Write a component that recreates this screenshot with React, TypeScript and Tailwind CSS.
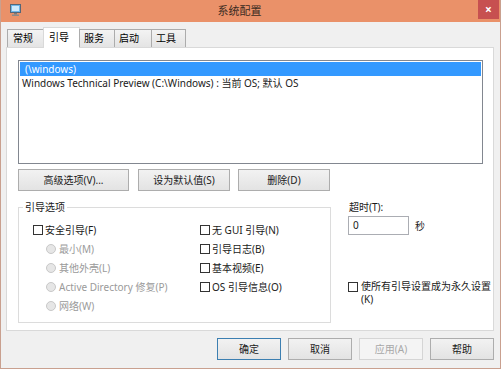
import React from "react";

type BoxProps = { label: string; disabled?: boolean };

function CheckBox({ label, disabled }: BoxProps) {
  return (
    <div className="flex items-center h-[19px] gap-[2px]">
      <span className="w-[10px] h-[10px] border border-[#333333] bg-white shrink-0" />
      <span className={disabled ? "text-[#a0a0a0]" : "text-[#1a1a1a]"}>{label}</span>
    </div>
  );
}

function Radio({ label }: BoxProps) {
  return (
    <div className="flex items-center h-[19px] gap-[3px] pl-[13px]">
      <span className="w-[10px] h-[10px] rounded-full border border-[#c8c8c8] bg-[#e6e6e6] shrink-0" />
      <span className="text-[#9a9a9a]">{label}</span>
    </div>
  );
}

type BtnProps = {
  children: React.ReactNode;
  className?: string;
  isDefault?: boolean;
  disabled?: boolean;
};

function Btn({ children, className, isDefault, disabled }: BtnProps) {
  let look = "border-[#adadad] bg-gradient-to-b from-[#f2f2f2] to-[#e3e3e3] text-[#1a1a1a]";
  if (isDefault) look = "border-[#3c7fb1] bg-gradient-to-b from-[#f2f2f2] to-[#e3e3e3] text-[#1a1a1a]";
  if (disabled) look = "border-[#d5d5d5] bg-[#f4f4f4] text-[#a8a8a8]";
  return (
    <div className={"h-[22px] border flex items-center justify-center shrink-0 " + look + " " + (className || "")}>
      {children}
    </div>
  );
}

export default function App() {
  return (
    <div className="w-[501px] h-[371px] bg-white font-['Noto_Sans','Noto_Sans_CJK_SC',sans-serif] text-[10px] leading-[14px]">
      <div className="h-[369px] flex flex-col bg-[#f0f0f0] border-l border-r border-b border-[#c9a08f]">
        {/* title bar */}
        <div className="h-[22px] bg-[#ea9169] flex items-start relative">
          <svg className="absolute left-[9px] top-[4px]" width="11" height="12" viewBox="0 0 11 12">
            <rect x="0.5" y="0.5" width="10" height="8" fill="#6fb6e8" stroke="#556677" />
            <rect x="2" y="2" width="7" height="5" fill="#cfe9fb" />
            <rect x="4" y="9" width="3" height="1.5" fill="#7a7a7a" />
            <rect x="2" y="10.5" width="7" height="1.5" fill="#8a8a8a" />
          </svg>
          <div className="flex-1 text-center text-[11px] leading-[22px] text-[#3b2b22]">系统配置</div>
          <div className="w-[21px] h-[19px] bg-[#c75050] flex items-center justify-center text-white text-[12px] font-bold mr-[1px]">
            ×
          </div>
        </div>

        {/* body */}
        <div className="flex-1 px-[5px] pt-[5px]">
          {/* tabs */}
          <div className="flex items-end h-[20px] pl-[1px] relative z-10">
            <div className="w-[37px] h-[18px] border border-b-0 border-[#acacac] bg-gradient-to-b from-[#f3f3f3] to-[#e4e4e4] pl-[5px] leading-[17px]">常规</div>
            <div className="w-[37px] h-[21px] -ml-px -mb-px border border-b-0 border-[#d9d9d9] bg-white pl-[5px] leading-[19px]">引导</div>
            <div className="w-[36px] h-[18px] -ml-px border border-b-0 border-[#acacac] bg-gradient-to-b from-[#f3f3f3] to-[#e4e4e4] pl-[4px] leading-[17px]">服务</div>
            <div className="w-[38px] h-[18px] -ml-px border border-b-0 border-[#acacac] bg-gradient-to-b from-[#f3f3f3] to-[#e4e4e4] pl-[4px] leading-[17px]">启动</div>
            <div className="w-[35px] h-[18px] -ml-px border border-b-0 border-[#acacac] bg-gradient-to-b from-[#f3f3f3] to-[#e4e4e4] pl-[4px] leading-[17px]">工具</div>
          </div>

          {/* tab page */}
          <div className="w-[488px] h-[284px] bg-white border border-[#d9d9d9] px-[11px] pt-[12px] text-[#1a1a1a]">
            <div className="w-[465px] h-[104px] border border-[#828790] p-px">
              <div className="h-[14px] bg-[#3399ff] text-white pl-[5px] leading-[14px]">(\windows)</div>
              <div className="h-[14px] pl-[2px] leading-[14px]">Windows Technical Preview (C:\Windows) : 当前 OS; 默认 OS</div>
            </div>

            <div className="flex mt-[5px]">
              <Btn className="w-[111px]">高级选项(V)...</Btn>
              <Btn className="w-[92px] ml-[9px]">设为默认值(S)</Btn>
              <Btn className="w-[92px] ml-[8px]">删除(D)</Btn>
            </div>

            <div className="flex mt-[8px]">
              <fieldset className="w-[313px] h-[124px] shrink-0 border border-[#dcdcdc]">
                <legend className="ml-[4px] px-[2px] leading-[16px]">引导选项</legend>
                <div className="flex pl-[14px] pt-[5px]">
                  <div className="w-[167px] flex flex-col">
                    <CheckBox label="安全引导(F)" />
                    <Radio label="最小(M)" />
                    <Radio label="其他外壳(L)" />
                    <Radio label="Active Directory 修复(P)" />
                    <Radio label="网络(W)" />
                  </div>
                  <div className="flex flex-col">
                    <CheckBox label="无 GUI 引导(N)" />
                    <CheckBox label="引导日志(B)" />
                    <CheckBox label="基本视频(E)" />
                    <CheckBox label="OS 引导信息(O)" />
                  </div>
                </div>
              </fieldset>

              <div className="ml-[17px] flex flex-col">
                <div className="pl-[1px] mt-[1px]">超时(T):</div>
                <div className="flex items-center mt-[2px]">
                  <div className="w-[61px] h-[19px] border border-[#abadb3] bg-white pl-[4px] leading-[16px]">0</div>
                  <span className="ml-[6px]">秒</span>
                </div>
                <div className="flex items-start mt-[45px] gap-[3px]">
                  <span className="w-[10px] h-[10px] mt-[2px] border border-[#333333] bg-white shrink-0" />
                  <span className="leading-[13px] whitespace-nowrap">
                    使所有引导设置成为永久设置
                    <br />
                    (K)
                  </span>
                </div>
              </div>
            </div>
          </div>

          {/* dialog buttons */}
          <div className="flex mt-[7px] pl-[211px] gap-[7px]">
            <Btn className="w-[64px]" isDefault>确定</Btn>
            <Btn className="w-[64px]">取消</Btn>
            <Btn className="w-[64px]" disabled>应用(A)</Btn>
            <Btn className="w-[64px]">帮助</Btn>
          </div>
        </div>
      </div>
    </div>
  );
}
